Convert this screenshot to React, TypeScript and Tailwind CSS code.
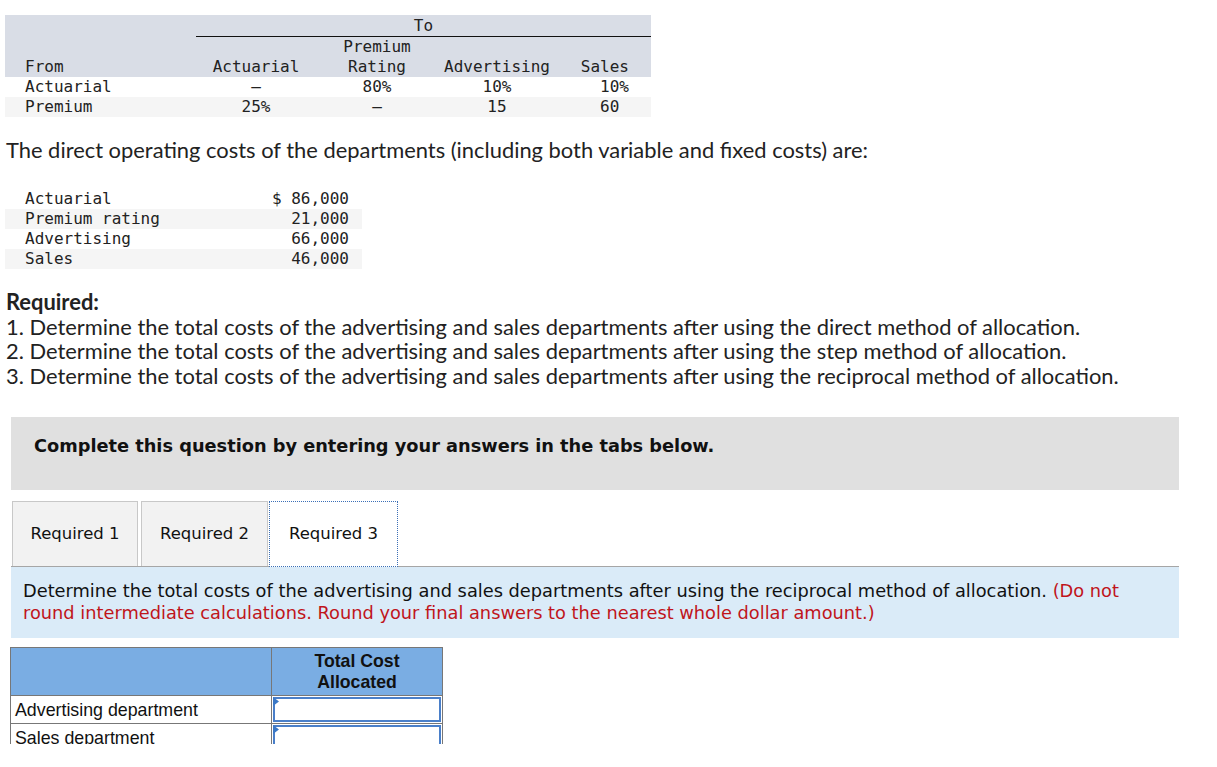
import React from "react";

const mono = "font-['DejaVu_Sans_Mono',monospace] text-[16px] leading-[20px] text-[#222]";
const body = "font-['Lato',sans-serif] text-[21.9px] text-[#222]";
const verdana = "font-['DejaVu_Sans',Verdana,sans-serif]";

interface Share {
  from: string;
  actuarial: string;
  premium: string;
  advertising: string;
  sales: string;
}

const shares: Share[] = [
  { from: "Actuarial", actuarial: "—", premium: "80%", advertising: "10%", sales: "10%" },
  { from: "Premium", actuarial: "25%", premium: "—", advertising: "15", sales: "60 " },
];

const costs = [
  { name: "Actuarial", amount: "$ 86,000" },
  { name: "Premium rating", amount: "21,000" },
  { name: "Advertising", amount: "66,000" },
  { name: "Sales", amount: "46,000" },
];

const AnswerCell: React.FC = () => (
  <td className="border border-[#777] p-0 h-[28px] relative">
    <div className="absolute inset-[1px] border-2 border-[#4a7fc9] bg-white" />
    <svg className="absolute left-[1px] top-[1px]" width="6" height="9" viewBox="0 0 6 9">
      <polygon points="0,0 6,4.5 0,9" fill="#3b78c6" />
    </svg>
  </td>
);

const App: React.FC = () => {
  return (
    <div className="w-[1217px] h-[744px] overflow-hidden bg-white">
      {/* shares table */}
      <div className="pt-[15px] pl-[5px]">
        <table className={`${mono} w-[646px] border-collapse`}>
          <thead className="bg-[#d9dde6]">
            <tr>
              <th className="w-[191px]" />
              <th colSpan={4} className="font-normal text-center border-b border-[#111] h-[20px] pt-[1px]">
                To
              </th>
            </tr>
            <tr>
              <th className="text-left font-normal align-bottom pl-[20px] pt-[1px]">From</th>
              <th className="font-normal align-bottom w-[120px] text-center">Actuarial</th>
              <th className="font-normal align-bottom w-[122px] text-center">
                Premium
                <br />
                Rating
              </th>
              <th className="font-normal align-bottom w-[118px] text-center">Advertising</th>
              <th className="font-normal align-bottom text-right pr-[22px]">Sales</th>
            </tr>
          </thead>
          <tbody>
            {shares.map((s, i) => (
              <tr key={s.from} className={i % 2 ? "bg-[#f5f5f5]" : "bg-white"}>
                <td className="pl-[20px]">{s.from}</td>
                <td className="text-center">{s.actuarial}</td>
                <td className="text-center">{s.premium}</td>
                <td className="text-center">{s.advertising}</td>
                <td className="text-right pr-[22px] whitespace-pre">{s.sales}</td>
              </tr>
            ))}
          </tbody>
        </table>
      </div>

      <p className={`${body} mt-[21px] ml-[6px] leading-[24px]`}>
        The direct operating costs of the departments (including both variable and fixed costs) are:
      </p>

      {/* direct costs */}
      <div className="mt-[27px] pl-[5px]">
        <table className={`${mono} w-[357px] border-collapse`}>
          <tbody>
            {costs.map((c, i) => (
              <tr key={c.name} className={i % 2 ? "bg-[#f5f5f5]" : "bg-white"}>
                <td className="pl-[20px]">{c.name}</td>
                <td className="text-right pr-[13px] whitespace-pre">{c.amount}</td>
              </tr>
            ))}
          </tbody>
        </table>
      </div>

      <div className={`${body} mt-[21px] ml-[6px] leading-[24.5px]`}>
        <p className="font-bold">Required:</p>
        <p>1. Determine the total costs of the advertising and sales departments after using the direct method of allocation.</p>
        <p>2. Determine the total costs of the advertising and sales departments after using the step method of allocation.</p>
        <p>3. Determine the total costs of the advertising and sales departments after using the reciprocal method of allocation.</p>
      </div>

      <div className="mx-[11px] w-[1168px] mt-[29px]">
        <div className={`${verdana} bg-[#e0e0e0] h-[73px] pl-[23px] pt-[19px] font-bold text-[17.75px] leading-[21px] text-[#111]`}>
          Complete this question by entering your answers in the tabs below.
        </div>

        <div className={`${verdana} flex items-end mt-[11px] text-[16.5px] text-[#111] border-b border-[#a6a6a6] pl-[1px]`}>
          <div className="w-[126px] h-[65px] flex items-center justify-center bg-[#f2f2f2] border border-[#c8c8c8] border-b-0">
            Required 1
          </div>
          <div className="w-[127px] h-[65px] ml-[3px] flex items-center justify-center bg-[#f2f2f2] border border-[#c8c8c8] border-b-0">
            Required 2
          </div>
          <div className="w-[129px] h-[66px] ml-[1px] -mb-px flex items-center justify-center bg-white border border-dotted border-[#3b6fb6]">
            Required 3
          </div>
        </div>

        <div className={`${verdana} bg-[#daebf8] h-[71px] pl-[12px] pr-[12px] pt-[13px] text-[17.8px] leading-[22px] text-[#111]`}>
          Determine the total costs of the advertising and sales departments after using the reciprocal method of allocation.{" "}
          <span className="text-[#c0151b]">
            (Do not round intermediate calculations. Round your final answers to the nearest whole dollar amount.)
          </span>
        </div>
      </div>

      {/* answer table */}
      <table className="ml-[10px] mt-[9px] border-collapse font-['Liberation_Sans',Arial,sans-serif] text-[17.8px] text-[#111]">
        <thead>
          <tr className="bg-[#7aade3]">
            <th className="w-[261px] border border-[#777]" />
            <th className="w-[171px] h-[48px] border border-[#777] font-bold text-[17.7px] leading-[21px] text-center">
              Total Cost
              <br />
              Allocated
            </th>
          </tr>
        </thead>
        <tbody>
          <tr>
            <td className="border border-[#777] pl-[4px] h-[28px] leading-[20px]">Advertising department</td>
            <AnswerCell />
          </tr>
          <tr>
            <td className="border border-[#777] pl-[4px] h-[28px] leading-[20px]">Sales department</td>
            <AnswerCell />
          </tr>
        </tbody>
      </table>
    </div>
  );
};

export default App;
